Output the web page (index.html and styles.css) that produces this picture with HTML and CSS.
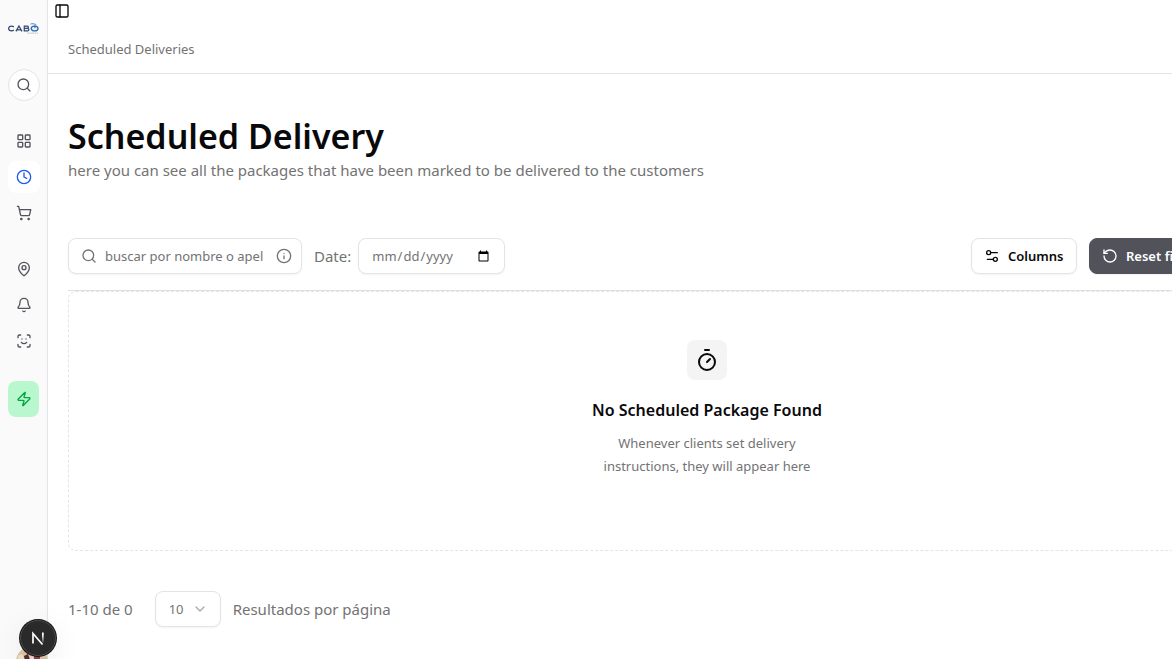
FILE: index.html
```
<!DOCTYPE html>
<html lang="en">
<head>
<meta charset="utf-8">
<title>Scheduled Deliveries</title>
<link rel="stylesheet" href="styles.css">
</head>
<body>
<div class="app">
  <aside class="sidebar">
    <a class="logo" href="#" aria-label="Cabo">
      <svg width="32" height="12" viewBox="0 0 32 12" fill="none">
        <g stroke="#34496f" stroke-width="1.3">
          <path d="M6 5C5.400 4.300 4.700 4 3.700 4 1.800 4 .7 5 .7 6.500S1.800 9 3.700 9c1 0 1.700-.3 2.300-1"/>
          <path d="M8.200 9.500 11.300 4l3.100 5.500M9.400 7.900h3.800"/>
          <path d="M16.800 4h3c1.700 0 1.700 2.300 0 2.300h-3 3.300c1.900 0 1.900 2.700 0 2.700h-3.300z"/>
        </g>
        <ellipse cx="27.500" cy="6.500" rx="3.500" ry="2.500" stroke="#2f6db5" stroke-width="1.400"/>
        <path d="M27.800 3.200v3" stroke="#2f6db5" stroke-width="1.200"/>
        <path d="M22 2.500c2.500-2.200 6-2 8 .8-2.300-1.200-5-1.500-8-.8z" fill="#3d8bd4"/>
        <path d="M20 11.300h11" stroke="#b4bccb" stroke-width="1" stroke-dasharray="2 .5"/>
      </svg>
    </a>
    <button class="search-button" aria-label="Search">
      <svg class="icon" viewBox="0 0 24 24"><circle cx="11" cy="11" r="8"/><path d="m21 21-4.300-4.300"/></svg>
    </button>
    <nav class="nav-group" aria-label="Main">
      <a class="nav-item" href="#" aria-label="Dashboard"><svg class="icon" viewBox="0 0 24 24"><rect width="7" height="7" x="3" y="3" rx="1"/><rect width="7" height="7" x="14" y="3" rx="1"/><rect width="7" height="7" x="14" y="14" rx="1"/><rect width="7" height="7" x="3" y="14" rx="1"/></svg></a>
      <a class="nav-item active" href="#" aria-label="Scheduled"><svg class="icon" viewBox="0 0 24 24"><circle cx="12" cy="12" r="10"/><path d="M12 6v6l4 2"/></svg></a>
      <a class="nav-item" href="#" aria-label="Orders"><svg class="icon" viewBox="0 0 24 24"><circle cx="8" cy="21" r="1"/><circle cx="19" cy="21" r="1"/><path d="M2.050 2.050h2l2.660 12.420a2 2 0 0 0 2 1.580h9.780a2 2 0 0 0 1.950-1.570l1.650-7.430H5.120"/></svg></a>
    </nav>
    <nav class="nav-group" aria-label="Tools">
      <a class="nav-item" href="#" aria-label="Locations"><svg class="icon" viewBox="0 0 24 24"><path d="M20 10c0 4.993-5.539 10.193-7.399 11.799a1 1 0 0 1-1.202 0C9.539 20.193 4 14.993 4 10a8 8 0 0 1 16 0"/><circle cx="12" cy="10" r="3"/></svg></a>
      <a class="nav-item" href="#" aria-label="Notifications"><svg class="icon" viewBox="0 0 24 24"><path d="M10.268 21a2 2 0 0 0 3.464 0"/><path d="M3.262 15.326A1 1 0 0 0 4 17h16a1 1 0 0 0 .740-1.673C19.410 13.956 18 12.499 18 8A6 6 0 0 0 6 8c0 4.499-1.411 5.956-2.738 7.326"/></svg></a>
      <a class="nav-item" href="#" aria-label="Face scan"><svg class="icon" viewBox="0 0 24 24"><path d="M3 7V5a2 2 0 0 1 2-2h2M17 3h2a2 2 0 0 1 2 2v2M21 17v2a2 2 0 0 1-2 2h-2M7 21H5a2 2 0 0 1-2-2v-2M8 14s1.500 2 4 2 4-2 4-2M9 9h.01M15 9h.01"/></svg></a>
    </nav>
    <button class="quick-action" aria-label="Quick action"><svg class="icon" viewBox="0 0 24 24"><path d="M4 14a1 1 0 0 1-.780-1.630l9.900-10.200a.5.5 0 0 1 .860.460l-1.920 6.020A1 1 0 0 0 13 10h7a1 1 0 0 1 .780 1.630l-9.900 10.200a.5.5 0 0 1-.860-.460l1.920-6.020A1 1 0 0 0 11 14z"/></svg></button>
  </aside>

  <main class="main">
    <div class="trigger-bar">
      <button class="trigger" aria-label="Toggle sidebar"><svg class="icon" viewBox="0 0 24 24"><rect width="18" height="18" x="3" y="3" rx="2"/><path d="M9 3v18"/></svg></button>
    </div>
    <header class="breadcrumb">Scheduled Deliveries</header>
    <div class="content">
      <h1 class="title">Scheduled Delivery</h1>
      <p class="subtitle">here you can see all the packages that have been marked to be delivered to the customers</p>
      <div class="toolbar">
        <div class="filters">
          <div class="field search-field">
            <svg class="icon" viewBox="0 0 24 24"><circle cx="11" cy="11" r="8"/><path d="m21 21-4.300-4.300"/></svg>
            <input class="search-input" type="text" aria-label="Buscar" placeholder="buscar por nombre o apellido">
            <svg class="icon" viewBox="0 0 24 24"><circle cx="12" cy="12" r="10"/><path d="M12 16v-4M12 8h.01"/></svg>
          </div>
          <label class="date-label" for="date">Date:</label>
          <input class="field date-input" id="date" type="date">
        </div>
        <div class="actions">
          <button class="button"><svg class="icon" viewBox="0 0 24 24"><path d="M20 7h-9M14 17H5"/><circle cx="17" cy="17" r="3"/><circle cx="7" cy="7" r="3"/></svg>Columns</button>
          <button class="button dark"><svg class="icon" viewBox="0 0 24 24"><path d="M3 12a9 9 0 1 0 9-9 9.750 9.750 0 0 0-6.740 2.740L3 8"/><path d="M3 3v5h5"/></svg>Reset filters</button>
        </div>
      </div>
      <section class="empty">
        <div class="empty-icon"><svg class="icon" viewBox="0 0 24 24"><path d="M10 2h4M12 14l3-3"/><circle cx="12" cy="14" r="8"/></svg></div>
        <h2 class="empty-title">No Scheduled Package Found</h2>
        <p class="empty-text">Whenever clients set delivery<br>instructions, they will appear here</p>
      </section>
      <footer class="pagination">
        <span>1-10 de 0</span>
        <div class="field page-size">
          <select class="page-select" id="page-size"><option>10</option><option>20</option><option>50</option></select>
          <svg class="icon chevron" viewBox="0 0 24 24"><path d="m6 9 6 6 6-6"/></svg>
        </div>
        <label for="page-size">Resultados por página</label>
      </footer>
    </div>
  </main>
</div>
<div class="avatar">
  <svg width="32" height="32" viewBox="0 0 32 32"><circle cx="16" cy="16" r="16" fill="#dcc5a3"/><path d="M2 10l4-2 3 6-6 2z" fill="#eee2cc"/><path d="M8 10l4-2 2 6-5 1z" fill="#5b2636"/><path d="M14 10l4 1-1 6-3-2z" fill="#e9dccb"/><path d="M18 9h6v8h-6z" fill="#8e3d4b"/></svg>
</div>
<button class="dev-button" aria-label="Developer tools">
  <svg width="20" height="20" viewBox="0 0 20 20" fill="none">
    <defs><linearGradient id="fade" x1="0" y1="4" x2="0" y2="14" gradientUnits="userSpaceOnUse"><stop offset=".3" stop-color="#fff"/><stop offset="1" stop-color="#fff" stop-opacity=".2"/></linearGradient></defs>
    <path d="M5 15.500V5.500l9.500 11" stroke="#fff" stroke-width="1.700"/><path d="M14 4.500h1.700v10H14z" fill="url(#fade)"/>
  </svg>
</button>
</body>
</html>
```
FILE: styles.css
```
* { box-sizing: border-box; }

body {
  margin: 0;
  overflow: hidden;
  background: #fff;
  color: #09090b;
  font: 15px/24px "Segoe UI", "Noto Sans", "Open Sans", sans-serif;
}

button, input, select { font: inherit; color: inherit; }
button { padding: 0; border: 0; background: none; cursor: pointer; }
h1, h2, p { margin: 0; }

.icon {
  width: 16px;
  height: 16px;
  flex: none;
  fill: none;
  stroke: currentColor;
  stroke-width: 2;
  stroke-linecap: round;
  stroke-linejoin: round;
}

.app { display: flex; min-height: 100vh; }

.sidebar {
  width: 48px;
  flex: none;
  display: flex;
  flex-direction: column;
  padding: 22px 8px 0 8px;
  border-right: 1px solid #e4e4e7;
  background: #fafafa;
  color: #52525b;
}

.logo { display: flex; height: 12px; margin-bottom: 35px; }

.search-button {
  display: grid;
  place-items: center;
  width: 32px;
  height: 32px;
  margin-bottom: 24px;
  border: 1px solid #e4e4e7;
  border-radius: 16px;
  background: #fff;
}

.nav-group { display: grid; gap: 4px; margin-bottom: 24px; }

.nav-item {
  display: grid;
  place-items: center;
  width: 32px;
  height: 32px;
  border-radius: 8px;
  color: inherit;
}

.nav-item.active { background: #fff; color: #1d5be0; }

.quick-action {
  display: grid;
  place-items: center;
  height: 36px;
  border-radius: 8px;
  background: #b9f8cf;
  color: #00a63e;
}

.main { flex: 1; min-width: 1318px; }
.trigger-bar { display: flex; height: 24px; }
.trigger { display: grid; place-items: center; width: 28px; height: 22px; }

.breadcrumb {
  padding: 13px 20px 12px;
  border-bottom: 1px solid #e4e4e7;
  color: #737373;
  font-size: 13px;
}

.content { padding: 40px 20px 0; }
.title { font-size: 34px; line-height: 44px; font-weight: 600; }
.subtitle { color: #737373; }

.toolbar {
  display: flex;
  justify-content: space-between;
  margin-top: 56px;
  padding-bottom: 16px;
  border-bottom: 1px solid #e0e0e2;
}

.filters { display: flex; align-items: center; color: #737373; }

.field {
  height: 36px;
  border: 1px solid #e4e4e7;
  border-radius: 8px;
  background: #fff;
  box-shadow: 0 1px 2px rgba(0, 0, 0, .05);
}

.search-field {
  display: flex;
  align-items: center;
  gap: 8px;
  width: 234px;
  padding: 0 9px 0 12px;
}

.search-input {
  flex: 1;
  min-width: 0;
  margin-right: 5px;
  padding: 0;
  border: 0;
  outline: 0;
  background: none;
  font-size: 13px;
}

.search-input::placeholder { color: #737373; }
.date-label { margin: 0 7px 0 12px; }
.date-input { width: 147px; padding: 0 12px; font-size: 13px; }

.actions { display: flex; gap: 12px; width: 375px; }

.button {
  display: flex;
  align-items: center;
  gap: 8px;
  min-width: 106px;
  height: 36px;
  padding: 0 12px;
  border: 1px solid #e4e4e7;
  border-radius: 8px;
  font-size: 13px;
  font-weight: 600;
  box-shadow: 0 1px 2px rgba(0, 0, 0, .05);
}

.button.dark { border-color: #52525b; background: #52525b; color: #fff; }

.empty {
  display: flex;
  flex-direction: column;
  align-items: center;
  padding: 48px 24px 72px;
  border: 1px dashed #e4e4e7;
  border-radius: 8px;
  text-align: center;
}

.empty-icon {
  display: grid;
  place-items: center;
  width: 40px;
  height: 40px;
  margin-bottom: 16px;
  border-radius: 8px;
  background: #f4f4f5;
}

.empty-icon .icon { width: 24px; height: 24px; }
.empty-title { font-size: 16px; line-height: 28px; font-weight: 600; }
.empty-text { margin-top: 8px; color: #737373; font-size: 13px; line-height: 23px; }

.pagination {
  display: flex;
  align-items: center;
  margin-top: 40px;
  color: #737373;
}

.page-size { display: grid; align-items: center; width: 66px; margin: 0 12px 0 22px; }

.page-select {
  grid-area: 1 / 1;
  height: 34px;
  padding: 0 13px;
  border: 0;
  outline: 0;
  appearance: none;
  background: none;
  font-size: 13px;
}

.chevron { grid-area: 1 / 1; justify-self: end; margin-right: 12px; opacity: .6; pointer-events: none; }

.avatar { position: fixed; left: 16px; bottom: -19px; display: flex; }

.dev-button {
  position: fixed;
  left: 20px;
  bottom: 3px;
  display: grid;
  place-items: center;
  width: 36px;
  height: 36px;
  border: 1px solid #4a4a4a;
  border-radius: 18px;
  background: #2b2a2a;
  box-shadow: 0 0 0 1px #171717, 0 8px 32px rgba(0, 0, 0, .08);
}
```
